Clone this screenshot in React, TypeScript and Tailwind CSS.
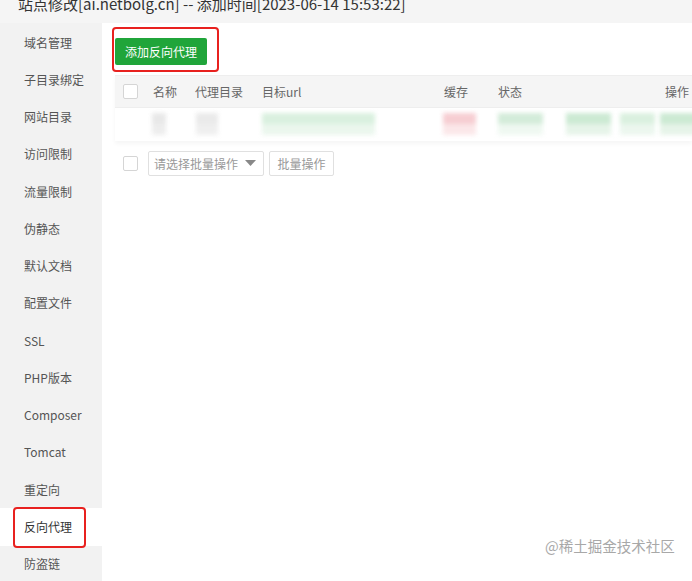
import React from 'react';

const menu = [
  '域名管理',
  '子目录绑定',
  '网站目录',
  '访问限制',
  '流量限制',
  '伪静态',
  '默认文档',
  '配置文件',
  'SSL',
  'PHP版本',
  'Composer',
  'Tomcat',
  '重定向',
  '反向代理',
  '防盗链',
];

const font = { fontFamily: '"Microsoft YaHei", "Noto Sans CJK SC", sans-serif' };

const Checkbox: React.FC = () => (
  <span className="block w-[15px] h-[15px] border border-[#d5d5d5] rounded-[2px] bg-white" />
);

// blurred (privacy-masked) cell: a top and bottom half of colour
const Smudge: React.FC<{ w: string; top: string; bottom: string; ml: string }> = ({ w, top, bottom, ml }) => (
  <div className={`flex flex-col shrink-0 ${w} ${ml}`}>
    <span className={`h-[11px] ${top}`} />
    <span className={`h-[11px] ${bottom}`} />
  </div>
);

const App: React.FC = () => {
  return (
    <div className="relative w-[692px] h-[581px] overflow-hidden bg-white text-[#333]" style={font}>
      {/* title bar, cut at the top */}
      <div className="h-[23px] overflow-hidden bg-[#f5f5f5] pl-[18px]">
        <div className="-mt-[6px] text-[15px] leading-[20px] text-[#333] whitespace-nowrap">
          站点修改[ai.netbolg.cn] -- 添加时间[2023-06-14 15:53:22]
        </div>
      </div>

      <div className="flex h-[558px]">
        {/* side menu */}
        <div className="w-[102px] shrink-0 bg-[#f2f2f2] pt-[1px]">
          {menu.map((m) => {
            const active = m === '反向代理';
            return (
              <div
                key={m}
                className={
                  'relative h-[37.25px] flex items-center pl-[24px] text-[12px] ' +
                  (active ? 'bg-white text-[#333]' : 'text-[#555]')
                }
              >
                {m}
                {active && (
                  <span className="absolute left-[13px] top-[-1px] w-[73px] h-[41px] border-2 border-[#e8211f] rounded-[4px]" />
                )}
              </div>
            );
          })}
        </div>

        {/* main */}
        <div className="flex-1 min-w-0 pl-[13px] pt-[15px]">
          <div className="relative inline-block">
            <button className="h-[27px] px-[10px] rounded-[2px] bg-[#20a53a] text-white text-[12px] leading-[27px]">
              添加反向代理
            </button>
            <span className="absolute left-[-3px] top-[-11px] w-[107px] h-[45px] border-2 border-[#e8211f] rounded-[4px]" />
          </div>

          <div className="mt-[10px] shadow-[0_3px_4px_rgba(0,0,0,0.04)]">
            <div className="flex items-center h-[33px] bg-[#f5f5f5] border-y border-[#eeeeee] text-[12px] text-[#666]">
              <div className="w-[38px] pl-[8px]">
                <Checkbox />
              </div>
              <div className="w-[42px]">名称</div>
              <div className="w-[67px]">代理目录</div>
              <div className="w-[182px]">目标url</div>
              <div className="w-[54px]">缓存</div>
              <div className="flex-1">状态</div>
              <div className="pr-[3px]">操作</div>
            </div>
            <div className="h-[33px] overflow-hidden">
              <div className="flex items-start pt-[5px] blur-[2px] opacity-90">
                <Smudge w="w-[14px]" ml="ml-[37px]" top="bg-[#e6e6e6]" bottom="bg-[#ececec]" />
                <Smudge w="w-[22px]" ml="ml-[30px]" top="bg-[#e8e8e8]" bottom="bg-[#eeeeee]" />
                <Smudge w="w-[113px]" ml="ml-[44px]" top="bg-[#d6efdc]" bottom="bg-[#e9f6ec]" />
                <Smudge w="w-[33px]" ml="ml-[68px]" top="bg-[#f6c9ce]" bottom="bg-[#fbe5e7]" />
                <Smudge w="w-[45px]" ml="ml-[22px]" top="bg-[#cfead6]" bottom="bg-[#eef8f0]" />
                <Smudge w="w-[45px]" ml="ml-[23px]" top="bg-[#c7e8cf]" bottom="bg-[#e4f3e7]" />
                <Smudge w="w-[35px]" ml="ml-[9px]" top="bg-[#d7efdc]" bottom="bg-[#eaf6ed]" />
                <Smudge w="w-[40px]" ml="ml-[5px]" top="bg-[#c7e8cf]" bottom="bg-[#e4f3e7]" />
              </div>
            </div>
          </div>

          <div className="mt-[10px] flex items-center">
            <div className="pl-[8px] w-[33px]">
              <Checkbox />
            </div>
            <div className="flex items-center justify-between w-[116px] h-[25px] border border-[#e0e0e0] rounded-[2px] px-[5px] text-[12px] text-[#999]">
              <span>请选择批量操作</span>
              <svg width="11" height="7" viewBox="0 0 11 7" className="mr-[2px]">
                <path d="M0 0 L11 0 L5.5 6 Z" fill="#888" />
              </svg>
            </div>
            <button className="ml-[5px] h-[25px] w-[65px] border border-[#e0e0e0] rounded-[2px] bg-white text-[12px] text-[#999]">
              批量操作
            </button>
          </div>
        </div>
      </div>

      <div className="absolute left-[545px] top-[535px] text-[14.5px] text-[#a8a8a8] whitespace-nowrap">
        @稀土掘金技术社区
      </div>
    </div>
  );
};

export default App;
